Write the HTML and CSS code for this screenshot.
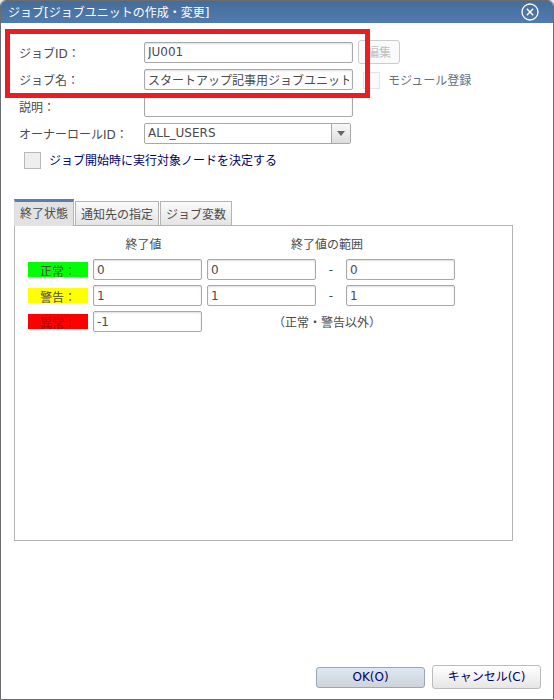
FILE: index.html
```html
<!DOCTYPE html>
<html lang="ja">
<head>
  <meta charset="UTF-8" />
  <meta name="viewport" content="width=device-width, initial-scale=1.0"/>
  <title>ジョブ[ジョブユニットの作成・変更]</title>
  <link rel="stylesheet" href="styles.css">
</head>
<body>

  <div class="dialog">
    <header class="title-bar">
      <h1>ジョブ[ジョブユニットの作成・変更]</h1>
      <button type="button" class="close-btn" aria-label="閉じる">
        <svg width="18" height="18" viewBox="0 0 18 18" fill="none" stroke="#ffffff">
          <circle cx="9" cy="9" r="8" stroke-width="1.3"/>
          <path d="M5.8 5.8l6.4 6.4M12.2 5.8l-6.4 6.4" stroke-width="1.5"/>
        </svg>
      </button>
    </header>

    <form class="job-form">
      <div class="form-row">
        <label for="jobId">ジョブID：</label>
        <input type="text" id="jobId" value="JU001" />
        <button type="button" class="edit-btn" disabled>編集</button>
      </div>
      <div class="form-row">
        <label for="jobName">ジョブ名：</label>
        <input type="text" id="jobName" value="スタートアップ記事用ジョブユニット" />
        <div class="module">
          <input type="checkbox" id="module" disabled />
          <label for="module">モジュール登録</label>
        </div>
      </div>
      <div class="form-row">
        <label for="description">説明：</label>
        <input type="text" id="description" />
      </div>
      <div class="form-row">
        <label for="ownerRole">オーナーロールID：</label>
        <div class="select-box">
          <select id="ownerRole">
            <option>ALL_USERS</option>
          </select>
        </div>
      </div>
      <div class="check-row">
        <input type="checkbox" id="decideNode" />
        <label for="decideNode">ジョブ開始時に実行対象ノードを決定する</label>
      </div>
      <div class="highlight"></div>
    </form>

    <div class="tabs" role="tablist">
      <button type="button" class="tab active" role="tab" aria-selected="true">終了状態</button>
      <button type="button" class="tab" role="tab" aria-selected="false">通知先の指定</button>
      <button type="button" class="tab" role="tab" aria-selected="false">ジョブ変数</button>
    </div>

    <section class="tab-panel">
      <table class="end-table">
        <thead>
          <tr>
            <td></td>
            <th class="range">終了値</th>
            <th class="range" colspan="3">終了値の範囲</th>
          </tr>
        </thead>
        <tbody>
          <tr>
            <th><label class="status normal" for="normalValue">正常：</label></th>
            <td><input type="text" id="normalValue" value="0" /></td>
            <td><input type="text" aria-label="正常 範囲 開始" value="0" /></td>
            <td class="dash">-</td>
            <td><input type="text" aria-label="正常 範囲 終了" value="0" /></td>
          </tr>
          <tr>
            <th><label class="status warning" for="warningValue">警告：</label></th>
            <td><input type="text" id="warningValue" value="1" /></td>
            <td><input type="text" aria-label="警告 範囲 開始" value="1" /></td>
            <td class="dash">-</td>
            <td><input type="text" aria-label="警告 範囲 終了" value="1" /></td>
          </tr>
          <tr>
            <th><label class="status error" for="errorValue">異常：</label></th>
            <td><input type="text" id="errorValue" value="-1" /></td>
            <td class="range" colspan="3">（正常・警告以外）</td>
          </tr>
        </tbody>
      </table>
    </section>

    <footer>
      <button type="button" class="btn ok">OK(O)</button>
      <button type="button" class="btn cancel">キャンセル(C)</button>
    </footer>
  </div>

</body>
</html>
```
FILE: styles.css
```css
* {
  box-sizing: border-box;
}

body {
  margin: 0;
  background-color: #e4e6ea;
}

body, input, select, button {
  font-family: 'DejaVu Sans', 'Noto Sans CJK JP', sans-serif;
  font-size: 12px;
  line-height: 18px;
  color: #4a4a4a;
}

.dialog {
  min-height: 100vh;
  display: flex;
  flex-direction: column;
  background: white;
  border: 1px solid #6c6d70;
  border-radius: 6px 6px 0 0;
  overflow: hidden;
}

.title-bar {
  height: 22px;
  padding: 0 14px 0 7px;
  display: flex;
  align-items: center;
  justify-content: space-between;
  background: linear-gradient(#456d9a, #517bb0);
}

.title-bar h1 {
  margin: 0;
  padding-top: 2px;
  font-size: 12px;
  font-weight: normal;
  color: white;
}

.close-btn {
  display: flex;
  padding: 0;
  border: none;
  background: none;
  cursor: pointer;
}

.job-form {
  position: relative;
  padding: 17px 18px 0;
  display: flex;
  flex-direction: column;
  gap: 3px;
}

.job-form label {
  padding-top: 4px;
}

.form-row {
  display: grid;
  grid-template-columns: 120px 209px 1fr;
  column-gap: 5px;
  align-items: center;
  min-height: 24px;
}

input[type="text"] {
  width: 100%;
  height: 21px;
  padding: 0 3px;
  border: 1px solid #a8a8a8;
  border-radius: 2px;
  background: white;
  box-shadow: inset 0 1px 2px #dddddd;
}

input[type="checkbox"] {
  appearance: none;
  width: 17px;
  height: 17px;
  margin: 0;
  border: 1px solid #b8b8b8;
  background: #eeeeee;
}

input[type="checkbox"]:checked {
  background: #517bb0;
}

input[type="checkbox"]:disabled {
  border-color: #e4e4e4;
  background: #fafafa;
}

.edit-btn {
  justify-self: start;
  width: 42px;
  height: 24px;
  padding: 2px 0 0;
  border: 1px solid #cccccc;
  border-radius: 3px;
  background: #fafafa;
  color: #c0c0c0;
}

.module {
  display: flex;
  align-items: center;
  gap: 8px;
  padding-left: 5px;
}

.module label {
  color: #667080;
}

.select-box {
  position: relative;
  width: 207px;
  height: 21px;
}

.select-box select {
  appearance: none;
  width: 100%;
  height: 21px;
  padding: 0 20px 0 3px;
  border: 1px solid #a8a8a8;
  border-radius: 2px;
  background: white;
}

/* drop-down arrow */
.select-box::before {
  content: "";
  position: absolute;
  top: 1px;
  right: 1px;
  bottom: 1px;
  width: 18px;
  border-left: 1px solid #a8a8a8;
  background: linear-gradient(#f8f8f8, #dddddd);
  pointer-events: none;
}

.select-box::after {
  content: "";
  position: absolute;
  top: 8px;
  right: 6px;
  border: 4px solid transparent;
  border-top: 5px solid #666666;
  border-bottom: none;
  pointer-events: none;
}

.check-row {
  display: flex;
  align-items: center;
  gap: 8px;
  padding-left: 5px;
}

.check-row label {
  color: #000066;
}

.check-row input,
.module input {
  margin-top: 2px;
}

.highlight {
  position: absolute;
  top: 6px;
  left: 4px;
  width: 365px;
  height: 69px;
  border: 5px solid #eb1c24;
  pointer-events: none;
}

.tabs {
  display: flex;
  align-items: flex-end;
  margin: 29px 13px 0;
}

.tab {
  height: 24px;
  padding: 2px 5px 0;
  margin-right: 1px;
  border: 1px solid #b4b4b4;
  border-bottom: none;
  background: linear-gradient(#fafafa, #e4e4e4);
}

.tab.active {
  position: relative;
  z-index: 1;
  height: 27px;
  padding: 0 5px;
  margin: 0 1px -1px 0;
  border-top: 3px solid #5a7eab;
  border-left-color: #dddddd;
  background: #e2e2e2;
}

.tab-panel {
  flex: 1;
  margin: 0 40px 0 13px;
  padding: 4px 8px;
  border: 1px solid #b4b4b4;
}

.end-table {
  border-spacing: 5px;
}

.end-table th,
.end-table td {
  padding: 0;
  font-weight: normal;
  text-align: center;
}

.end-table thead th {
  padding-top: 2px;
  line-height: 17px;
}

.end-table td input {
  display: block;
  width: 109px;
}

.end-table .range {
  padding-right: 8px;
}

.end-table tbody .range {
  padding-top: 2px;
}

.end-table .dash {
  width: 20px;
}

.status {
  display: block;
  width: 60px;
  height: 15px;
  padding-top: 3px;
  line-height: 15px;
}

.normal {
  background: #00ff00;
}

.warning {
  background: #ffff00;
}

.error {
  background: #ff0000;
  color: #a00000;
}

footer {
  display: flex;
  justify-content: flex-end;
  align-items: center;
  gap: 7px;
  padding: 124px 12px 10px;
}

.btn {
  width: 109px;
  height: 24px;
  padding: 0;
  border: 1px solid #bbbbbb;
  border-radius: 3px;
  background: linear-gradient(#ffffff, #e6e6e6);
  color: #000066;
  cursor: pointer;
}

.btn.ok {
  height: 21px;
  border-color: #98a6b8;
  background: linear-gradient(#dde7f3, #cfd3da);
}
```
